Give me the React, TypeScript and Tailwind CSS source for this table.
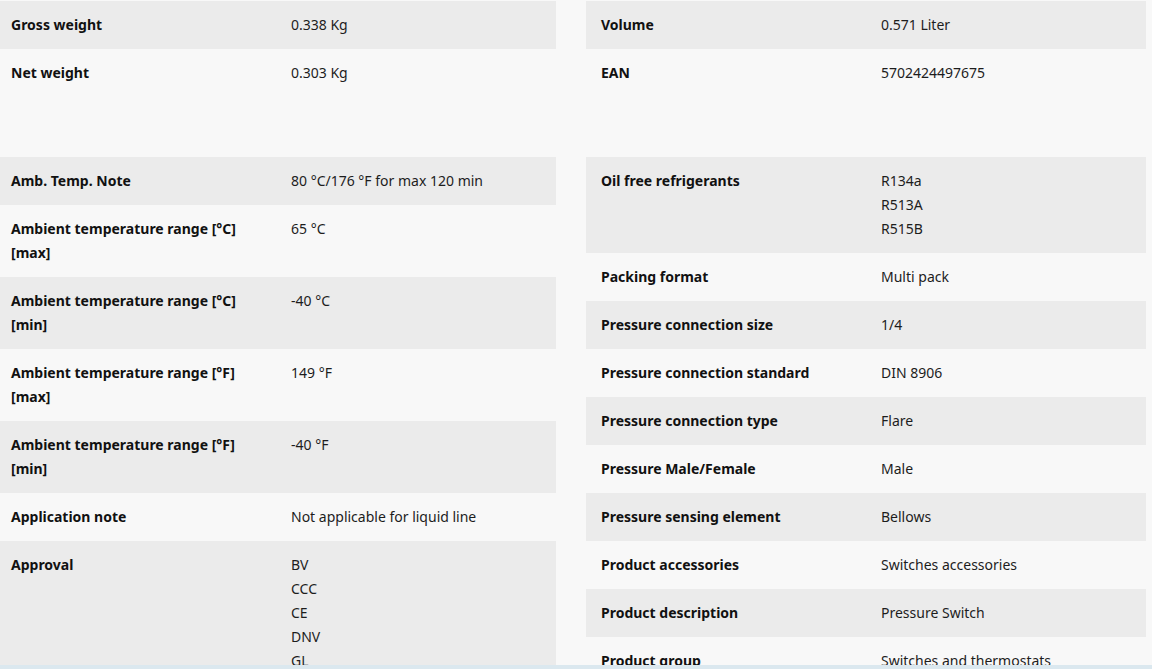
import React from "react";

type Row = { label: string; value: string[] };

const leftTop: Row[] = [
  { label: "Gross weight", value: ["0.338 Kg"] },
  { label: "Net weight", value: ["0.303 Kg"] },
];

const rightTop: Row[] = [
  { label: "Volume", value: ["0.571 Liter"] },
  { label: "EAN", value: ["5702424497675"] },
];

const leftMain: Row[] = [
  { label: "Amb. Temp. Note", value: ["80 °C/176 °F for max 120 min"] },
  { label: "Ambient temperature range [°C] [max]", value: ["65 °C"] },
  { label: "Ambient temperature range [°C] [min]", value: ["-40 °C"] },
  { label: "Ambient temperature range [°F] [max]", value: ["149 °F"] },
  { label: "Ambient temperature range [°F] [min]", value: ["-40 °F"] },
  { label: "Application note", value: ["Not applicable for liquid line"] },
  { label: "Approval", value: ["BV", "CCC", "CE", "DNV", "GL", "LR", "RINA"] },
];

const rightMain: Row[] = [
  { label: "Oil free refrigerants", value: ["R134a", "R513A", "R515B"] },
  { label: "Packing format", value: ["Multi pack"] },
  { label: "Pressure connection size", value: ["1/4"] },
  { label: "Pressure connection standard", value: ["DIN 8906"] },
  { label: "Pressure connection type", value: ["Flare"] },
  { label: "Pressure Male/Female", value: ["Male"] },
  { label: "Pressure sensing element", value: ["Bellows"] },
  { label: "Product accessories", value: ["Switches accessories"] },
  { label: "Product description", value: ["Pressure Switch"] },
  { label: "Product group", value: ["Switches and thermostats"] },
];

function SpecTable({ rows }: { rows: Row[] }) {
  return (
    <div className="w-[560px] flex flex-col">
      {rows.map((row, i) => (
        <div
          key={row.label}
          className={
            "flex py-3 text-[14px] leading-6 " +
            (i % 2 === 0 ? "bg-[#ebebeb]" : "bg-[#f8f8f8]")
          }
        >
          <div className="w-[295px] shrink-0 pl-[15px] pr-[50px] font-bold text-[#111]">
            {row.label}
          </div>
          <div className="text-[#1d1d1d]">
            {row.value.map((v) => (
              <div key={v}>{v}</div>
            ))}
          </div>
        </div>
      ))}
    </div>
  );
}

export default function App() {
  return (
    <div
      className="min-h-screen bg-[#f8f8f8] pt-px overflow-hidden"
      style={{ fontFamily: '"Noto Sans", "Open Sans", sans-serif' }}
    >
      <div className="flex gap-[30px] -ml-1">
        <div className="flex flex-col gap-[60px]">
          <SpecTable rows={leftTop} />
          <SpecTable rows={leftMain} />
        </div>
        <div className="flex flex-col gap-[60px]">
          <SpecTable rows={rightTop} />
          <SpecTable rows={rightMain} />
        </div>
      </div>
      <div className="fixed bottom-0 left-0 right-0 h-[4px] bg-[#dbe8ef]" />
    </div>
  );
}
